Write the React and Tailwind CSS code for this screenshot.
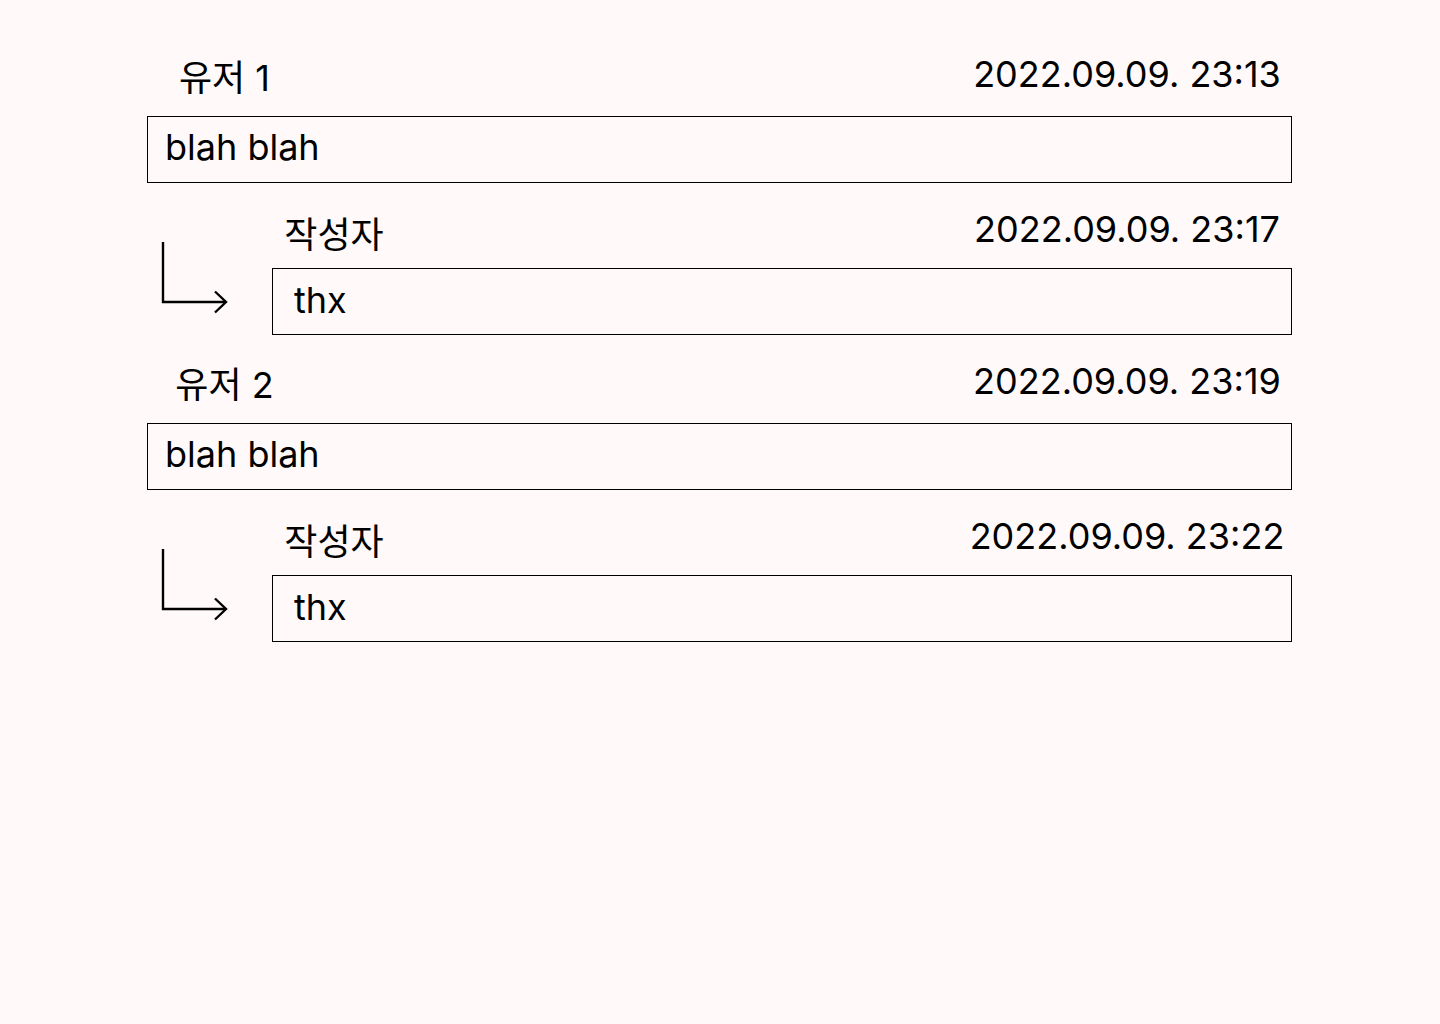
import React from 'react';

const comments = [
  {
    id: 1,
    user: '유저 1',
    date: '2022.09.09. 23:13',
    content: 'blah blah',
    reply: { user: '작성자', date: '2022.09.09. 23:17', content: 'thx' },
  },
  {
    id: 2,
    user: '유저 2',
    date: '2022.09.09. 23:19',
    content: 'blah blah',
    reply: { user: '작성자', date: '2022.09.09. 23:22', content: 'thx' },
  },
];

// 답글 화살표
const Arrow = () => (
  <svg width="125" height="152" viewBox="0 0 125 152" className="absolute left-0 top-0">
    <path d="M16 59 V119 H78" stroke="black" strokeWidth="2.4" fill="none" />
    <path d="M68 108.5 L79 119 L68 129.5" stroke="black" strokeWidth="2.4" fill="none" />
  </svg>
);

const Comment = ({ comment }) => (
  <div>
    <div className="flex justify-between h-[88px]">
      <div className="w-[155px] text-center pt-[30px] leading-[40px]">{comment.user}</div>
      <div className="w-[330px] text-center pt-[26px] leading-[40px]">{comment.date}</div>
    </div>
    <div className="border border-black h-[67px] pt-[10px] px-[17px] leading-[40px]">{comment.content}</div>
    <div className="relative">
      <Arrow />
      <div className="ml-[125px]">
        <div className="flex justify-between h-[85px]">
          <div className="w-[124px] text-center pt-[32px] leading-[40px]">{comment.reply.user}</div>
          <div className="w-[330px] text-center pt-[26px] leading-[40px]">{comment.reply.date}</div>
        </div>
        <div className="border border-black h-[67px] pt-[11px] pl-[21px] leading-[40px]">{comment.reply.content}</div>
      </div>
    </div>
  </div>
);

export default function App() {
  return (
    <div
      className="min-h-screen bg-[#fffaf9] text-black text-[36px] pt-[28px]"
      style={{ fontFamily: "Inter, 'Noto Sans CJK KR', sans-serif" }}
    >
      <div className="ml-[147px] w-[1145px]">
        {comments.map((c) => (
          <Comment key={c.id} comment={c} />
        ))}
      </div>
    </div>
  );
}
